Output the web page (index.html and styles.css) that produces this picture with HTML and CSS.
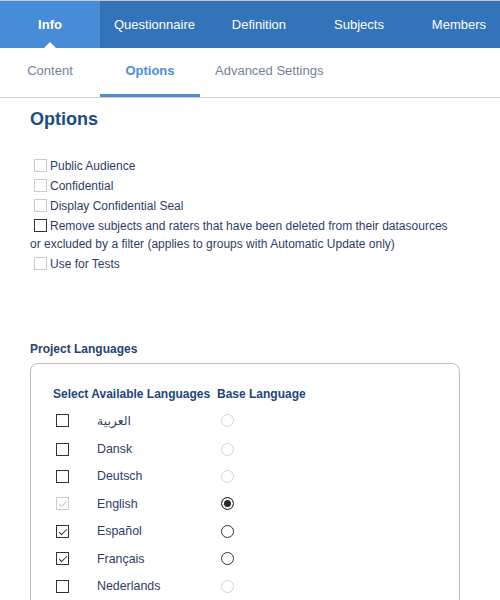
FILE: index.html
```html
<!DOCTYPE html>
<html lang="en">
<head>
  <meta charset="UTF-8">
  <meta name="viewport" content="width=device-width, initial-scale=1.0">
  <title>Project Options</title>
  <link rel="stylesheet" href="styles.css">
</head>
<body>
<nav class="main-nav">
  <a href="#" class="main-tab active">Info</a>
  <a href="#" class="main-tab">Questionnaire</a>
  <a href="#" class="main-tab">Definition</a>
  <a href="#" class="main-tab">Subjects</a>
  <a href="#" class="main-tab">Members</a>
</nav>

<nav class="sub-nav">
  <a href="#" class="sub-tab">Content</a>
  <a href="#" class="sub-tab active">Options</a>
  <a href="#" class="sub-tab">Advanced Settings</a>
</nav>

<main class="page">
  <h1 class="page-title">Options</h1>

  <ul class="option-list">
    <li><label><input type="checkbox" disabled>Public Audience</label></li>
    <li><label><input type="checkbox" disabled>Confidential</label></li>
    <li><label><input type="checkbox" disabled>Display Confidential Seal</label></li>
    <li><label><input type="checkbox">Remove subjects and raters that have been deleted from their datasources or excluded by a filter (applies to groups with Automatic Update only)</label></li>
    <li><label><input type="checkbox" disabled>Use for Tests</label></li>
  </ul>

  <h2 class="section-title">Project Languages</h2>

  <div class="lang-box">
    <table class="lang-table">
      <thead>
        <tr>
          <th colspan="2">Select Available Languages</th>
          <th>Base Language</th>
        </tr>
      </thead>
      <tbody>
        <tr class="first-row">
          <td class="col-check"><input type="checkbox"></td>
          <td class="col-name" lang="ar">العربية</td>
          <td><input type="radio" name="base" disabled></td>
        </tr>
        <tr>
          <td class="col-check"><input type="checkbox"></td>
          <td class="col-name">Dansk</td>
          <td><input type="radio" name="base" disabled></td>
        </tr>
        <tr>
          <td class="col-check"><input type="checkbox"></td>
          <td class="col-name">Deutsch</td>
          <td><input type="radio" name="base" disabled></td>
        </tr>
        <tr>
          <td class="col-check"><input type="checkbox" checked disabled></td>
          <td class="col-name">English</td>
          <td><input type="radio" name="base" checked></td>
        </tr>
        <tr>
          <td class="col-check"><input type="checkbox" checked></td>
          <td class="col-name">Español</td>
          <td><input type="radio" name="base"></td>
        </tr>
        <tr>
          <td class="col-check"><input type="checkbox" checked></td>
          <td class="col-name">Français</td>
          <td><input type="radio" name="base"></td>
        </tr>
        <tr>
          <td class="col-check"><input type="checkbox"></td>
          <td class="col-name">Nederlands</td>
          <td><input type="radio" name="base" disabled></td>
        </tr>
      </tbody>
    </table>
  </div>
</main>
</body>
</html>
```

FILE: styles.css
```css
body {
  margin: 0;
  font-family: "Liberation Sans", Arial, "DejaVu Sans", sans-serif;
  background: #fff;
  color: #2f3d66;
  border-top: 1px solid #c8c8c8;
  overflow: hidden;
}

a {
  text-decoration: none;
}

/* верхнее меню */
.main-nav {
  display: flex;
  height: 47px;
  background: #3373b9;
  white-space: nowrap;
  overflow: hidden;
}

.main-tab {
  position: relative;
  flex: none;
  min-width: 100px;
  padding: 0 14px;
  box-sizing: border-box;
  text-align: center;
  line-height: 47px;
  font-size: 13px;
  color: #fff;
}

.main-tab.active {
  background: #478cd6;
  font-weight: bold;
}

/* белый треугольник под активной вкладкой */
.main-tab.active::after {
  content: "";
  position: absolute;
  left: 50%;
  bottom: 0;
  margin-left: -6px;
  border-left: 6px solid transparent;
  border-right: 6px solid transparent;
  border-bottom: 6px solid #fff;
}

/* второе меню */
.sub-nav {
  display: flex;
  height: 49px;
  border-bottom: 1px solid #cfcfcf;
}

.sub-tab {
  min-width: 100px;
  padding: 0 15px;
  box-sizing: border-box;
  text-align: center;
  line-height: 46px;
  font-size: 13px;
  color: #72829a;
  border-bottom: 3px solid transparent;
}

.sub-tab.active {
  color: #4a8cd6;
  font-weight: bold;
  border-bottom-color: #4a8cd6;
}

.page {
  padding: 0 45px 0 30px;
}

.page-title {
  margin: 11px 0 28px;
  font-size: 18px;
  line-height: 20px;
  color: #1b4b80;
}

.option-list {
  list-style: none;
  margin: 0;
  padding: 0;
  font-size: 12px;
  line-height: 18px;
}

.option-list li {
  margin-bottom: 2px;
}

.option-list input {
  margin: 0 3px 0 4px;
  vertical-align: -2px;
}

.section-title {
  margin: 68px 0 6px;
  font-size: 12px;
  line-height: 16px;
  color: #27426e;
}

.lang-box {
  width: 430px;
  box-sizing: border-box;
  border: 1px solid #bdbdbd;
  border-radius: 8px;
  padding: 18px 22px 20px;
}

.lang-table {
  border-collapse: collapse;
  font-size: 12px;
}

.lang-table th {
  height: 24px;
  padding: 0;
  text-align: left;
  color: #24457a;
}

.lang-table td {
  height: 27.4px;
  padding: 0;
  vertical-align: middle;
}

.lang-table .first-row td {
  height: 29.4px;
}

.col-check {
  width: 44px;
}

.col-name {
  width: 120px;
  font-size: 12.4px;
}

.lang-table input[type="checkbox"] {
  margin: 0 0 0 3px;
  display: block;
}

.lang-table input[type="radio"] {
  margin: 0 0 0 4px;
  display: block;
}

/* свои чекбоксы и радио */
input[type="checkbox"],
input[type="radio"] {
  -webkit-appearance: none;
  appearance: none;
  position: relative;
  width: 13px;
  height: 13px;
  box-sizing: border-box;
  border: 1px solid #333;
  background: #fff;
}

input[type="checkbox"]:disabled {
  border-color: #cacaca;
}

input[type="checkbox"]:checked::after {
  content: "";
  position: absolute;
  left: 4px;
  top: 1px;
  width: 3px;
  height: 7px;
  border-right: 1px solid #333;
  border-bottom: 1px solid #333;
  transform: rotate(45deg);
}

input[type="checkbox"]:disabled:checked::after {
  border-color: #c4c4c4;
}

input[type="radio"] {
  border-radius: 50%;
}

input[type="radio"]:disabled {
  border-color: #d2d2d2;
}

input[type="radio"]:checked {
  background: #2b2b2b;
  box-shadow: inset 0 0 0 2px #fff;
}
```
